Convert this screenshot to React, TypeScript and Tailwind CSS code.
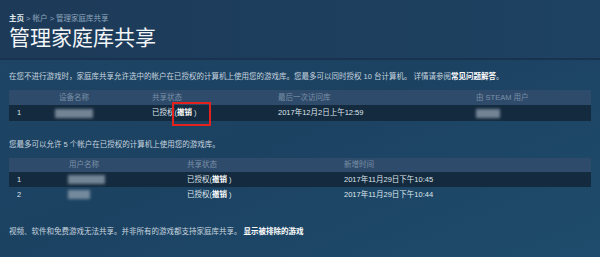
import React from 'react';

const font = { fontFamily: '"Liberation Sans", "Noto Sans CJK SC", sans-serif' };

function Blur({ w }: { w: string }) {
  return <div className={`h-[9px] ${w} bg-[#8b9cab] blur-[1.5px] opacity-80`} />;
}

function Status() {
  return (
    <span>
      已授权(<span className="font-bold text-white">撤销</span> )
    </span>
  );
}

export default function App() {
  return (
    <div style={font} className="w-[600px] h-[257px] overflow-hidden bg-gradient-to-br from-[#1f4566] via-[#1c4262] to-[#1f4c6c] text-[#c6d4df] text-[7.5px]">
      <header className="h-[58px] px-[9px] pt-[14px] bg-gradient-to-r from-[#1d3a58] to-[#1e4262]">
        <div className="leading-[10px] text-[#8fa6bc]">
          <span className="font-bold text-[#dfe6ec]">主页</span> &gt; 帐户 &gt; 管理家庭库共享
        </div>
        <h1 className="mt-[2px] text-[21px] leading-[24px] text-[#f2f5f8]">管理家庭库共享</h1>
      </header>
      <div className="h-[2px] bg-[#183250]" />

      <main className="px-[9px]">
        <p className="mt-[11px] leading-[11px]">
          在您不进行游戏时，家庭库共享允许选中的帐户在已授权的计算机上使用您的游戏库。您最多可以同时授权 10 台计算机。 详情请参阅
          <span className="font-bold text-white">常见问题解答</span>。
        </p>

        <div className="mt-[8px] w-[582px]">
          <div className="grid grid-cols-[46px_97px_126px_198px_1fr] h-[15px] items-center bg-[#2f4b6b] text-[#7890a6]">
            <div />
            <div className="pl-[4px]">设备名称</div>
            <div>共享状态</div>
            <div>最后一次访问库</div>
            <div>由 STEAM 用户</div>
          </div>
          <div className="relative grid grid-cols-[46px_97px_126px_198px_1fr] h-[16px] items-center bg-[#142a3e] text-[#dfe6ec]">
            <div className="pl-[8px]">1</div>
            <div><Blur w="w-[38px]" /></div>
            <div><Status /></div>
            <div>2017年12月2日上午12:59</div>
            <div><Blur w="w-[24px]" /></div>
            <div className="absolute left-[163px] top-[-3px] w-[39px] h-[24px] border-2 border-[#e3221d]" />
          </div>
        </div>

        <p className="mt-[18px] leading-[11px]">您最多可以允许 5 个帐户在已授权的计算机上使用您的游戏库。</p>

        <div className="mt-[8px] w-[582px]">
          <div className="grid grid-cols-[59px_119px_157px_1fr] h-[14px] items-center bg-[#2f4b6b] text-[#7890a6]">
            <div />
            <div className="pl-[1px]">用户名称</div>
            <div>共享状态</div>
            <div>新增时间</div>
          </div>
          <div className="grid grid-cols-[59px_119px_157px_1fr] h-[15px] items-center bg-[#142a3e] text-[#dfe6ec]">
            <div className="pl-[8px]">1</div>
            <div><Blur w="w-[37px]" /></div>
            <div><Status /></div>
            <div>2017年11月29日下午10:45</div>
          </div>
          <div className="grid grid-cols-[59px_119px_157px_1fr] h-[15px] items-center text-[#dfe6ec]">
            <div className="pl-[8px]">2</div>
            <div><Blur w="w-[22px]" /></div>
            <div><Status /></div>
            <div>2017年11月29日下午10:44</div>
          </div>
        </div>

        <p className="mt-[24px] leading-[11px]">
          视频、软件和免费游戏无法共享。并非所有的游戏都支持家庭库共享。 <span className="font-bold text-white">显示被排除的游戏</span>
        </p>
      </main>
    </div>
  );
}
